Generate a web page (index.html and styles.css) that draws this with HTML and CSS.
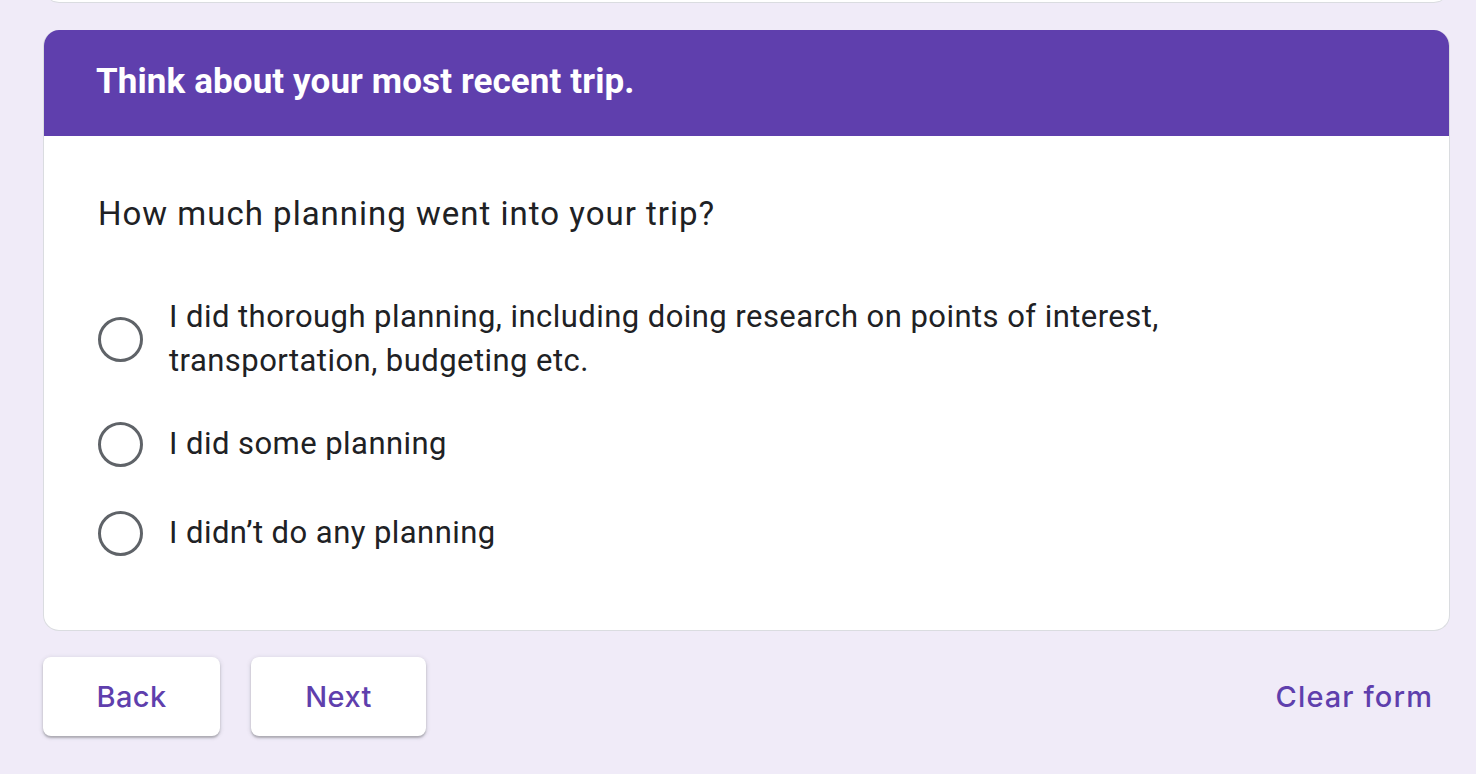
FILE: index.html
```html
<!DOCTYPE html>
<html>
<head>
<meta charset="utf-8">
<link rel="stylesheet" href="styles.css">
</head>
<body>
<div class="page">
  <div class="prev-clip"><div class="prev-card"></div></div>
  <div class="card">
    <div class="card-header">
      <h1 class="section-title">Think about your most recent trip.</h1>
    </div>
    <div class="card-body">
      <div class="question">How much planning went into your trip?</div>
      <div class="options">
        <label class="option">
          <span class="radio"></span>
          <span class="option-text">I did thorough planning, including doing research on points of interest, transportation, budgeting etc.</span>
        </label>
        <label class="option">
          <span class="radio"></span>
          <span class="option-text">I did some planning</span>
        </label>
        <label class="option">
          <span class="radio"></span>
          <span class="option-text">I didn’t do any planning</span>
        </label>
      </div>
    </div>
  </div>
  <div class="actions">
    <div class="nav-buttons">
      <button class="btn">Back</button>
      <button class="btn">Next</button>
    </div>
    <button class="clear">Clear form</button>
  </div>
</div>
</body>
</html>
```
FILE: styles.css
```css
html, body {
  margin: 0;
  padding: 0;
  background: #f0ebf8;
}
body {
  font-family: Roboto, "Liberation Sans", Arial, sans-serif;
  color: #202124;
}
.page {
  padding: 0 26px 0 43px;
  height: 774px;
  box-sizing: border-box;
  overflow: hidden;
}
.prev-clip {
  height: 4px;
  overflow: hidden;
}
.prev-card {
  height: 40px;
  margin-top: -37px;
  background: #fff;
  border: 1px solid #dadce0;
  border-radius: 16px;
  box-sizing: border-box;
}
.card {
  margin-top: 26px;
  background: #fff;
  border: 1px solid #dadce0;
  border-top: none;
  border-radius: 16px;
  overflow: hidden;
}
.card-header {
  background: #5f3fad;
  height: 106px;
  display: flex;
  align-items: center;
  padding-left: 53px;
  margin: 0 -1px;
}
.section-title {
  margin: 0;
  color: #fff;
  font-size: 35px;
  font-weight: 700;
  line-height: 40px;
  letter-spacing: 0.1px;
  padding-bottom: 2px;
}
.card-body {
  padding: 58px 54px 69px 54px;
}
.question {
  font-size: 33px;
  line-height: 40px;
  letter-spacing: 1px;
}
.options {
  margin-top: 61px;
  display: flex;
  flex-direction: column;
  gap: 33px;
}
.option {
  display: flex;
  align-items: center;
  gap: 26px;
  min-height: 56px;
}
.radio {
  flex: none;
  width: 45px;
  height: 45px;
  border: 3.3px solid #5f6368;
  border-radius: 50%;
  box-sizing: border-box;
}
.option-text {
  font-size: 31px;
  line-height: 44px;
  letter-spacing: 0.45px;
  max-width: 1060px;
}
.actions {
  margin-top: 26px;
  display: flex;
  justify-content: space-between;
  align-items: center;
}
.nav-buttons {
  display: flex;
  gap: 31px;
}
.btn {
  width: 177px;
  height: 79px;
  background: #fff;
  border: none;
  border-radius: 8px;
  box-shadow: 0 2px 2px rgba(60, 64, 67, 0.3), 0 1px 4px 1px rgba(60, 64, 67, 0.12);
  color: #5f3fad;
  font-family: Inter, Roboto, sans-serif;
  font-weight: 500;
  font-size: 29px;
  letter-spacing: 0.4px;
  padding: 0;
}
.btn + .btn {
  width: 175px;
}
.clear {
  background: none;
  border: none;
  color: #5f3fad;
  font-family: Inter, Roboto, sans-serif;
  font-weight: 500;
  font-size: 29px;
  letter-spacing: 1.1px;
  padding: 0 17px 0 0;
}
```
